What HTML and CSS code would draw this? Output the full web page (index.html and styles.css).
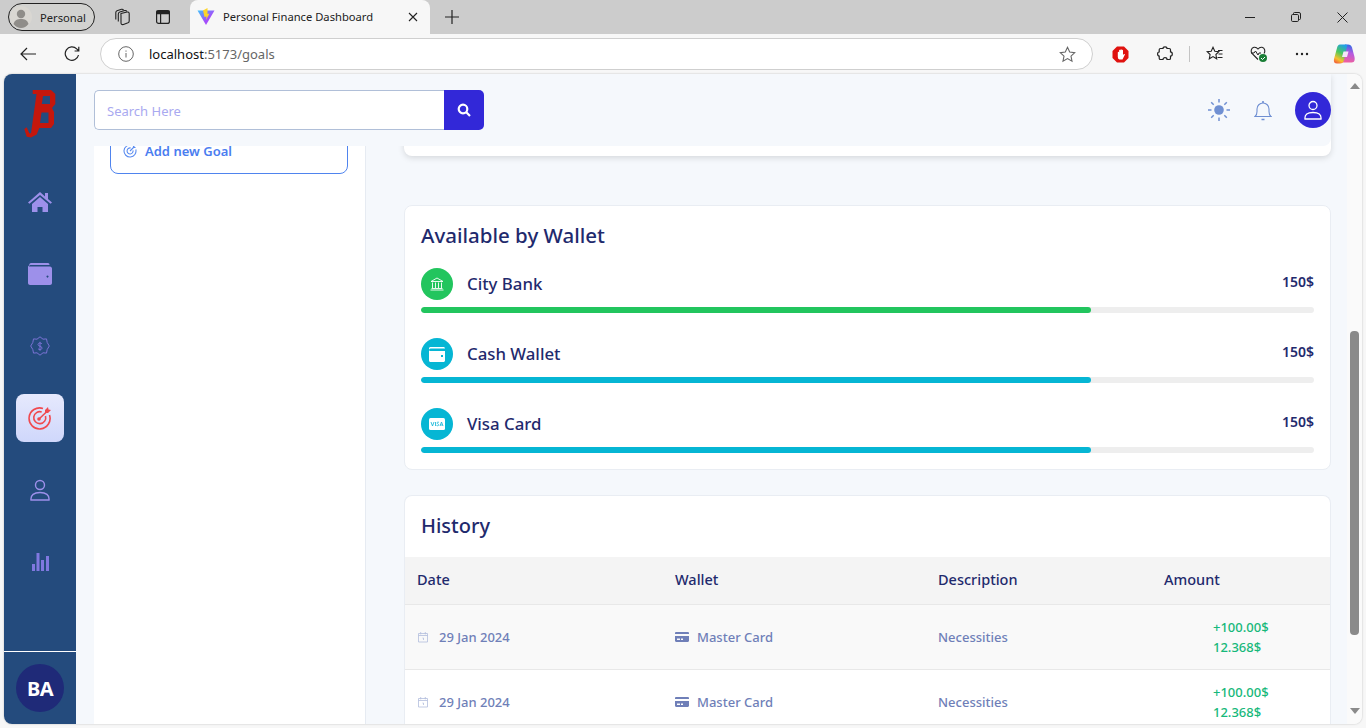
FILE: index.html
```html
<!DOCTYPE html>
<html lang="en">
<head>
<meta charset="utf-8">
<title>Personal Finance Dashboard</title>
<link rel="stylesheet" href="styles.css">
</head>
<body>
<svg class="defs" width="0" height="0" aria-hidden="true">
  <symbol id="cal" viewBox="0 0 12 12"><path d="M1.500 2.500h9v8.500h-9zM1.500 4.500h9M3.700 1v2.400M8.300 1v2.400M5.500 7h1v2" fill="none" stroke="currentColor" stroke-width=".8"/></symbol>
  <symbol id="card" viewBox="0 0 14 10"><path d="M1.200 0h11.600C13.500 0 14 .5 14 1.200V2H0v-.8C0 .5.5 0 1.200 0zM0 4h14v4.800c0 .7-.5 1.200-1.200 1.200H1.200C.5 10 0 9.500 0 8.800zm2 2.500V8h3V6.500zm4 0V8h2V6.500z" fill="currentColor" fill-rule="evenodd"/></symbol>
</svg>
<div class="browser">
  <div class="tabstrip">
    <div class="profile">
      <svg width="22" height="22" viewBox="0 0 22 22"><circle cx="11" cy="11" r="11" fill="#d9d7d2"/><circle cx="11" cy="8" r="4.200" fill="#8f8d89"/><path d="M3.500 18c1-4 4-5 7.500-5s6.500 1 7.500 5c-2 2.500-4.500 4-7.500 4s-5.500-1.500-7.500-4z" fill="#8f8d89"/></svg>
      <span>Personal</span>
    </div>
    <svg class="chrome-icon" width="18" height="18" viewBox="0 0 18 18" fill="none" stroke="#222" stroke-width="1.100"><path d="M8 5.500l6-1.500q2-.3 2.200 1.500v7.500q0 1.300-1.200 1.800l-4.500 1.700q-2.500.6-2.500-1.800V7.500Q7.800 6 8 5.500z"/><path d="M5.300 13.500V6q0-1.500 1.500-2l5-1.500q1.500-.3 2 1"/><path d="M2.800 11.500V4.500q0-1.300 1.200-1.800L8.500 1.300q1.500-.3 2 1"/></svg>
    <svg class="chrome-icon layout" width="16" height="16" viewBox="0 0 16 16" fill="none" stroke="#222" stroke-width="1.200"><rect x="1.600" y="1.600" width="12.800" height="12.800" rx="2"/><path d="M5.600 4.600v9.800"/><path d="M2 2h12v2.600H2z" fill="#222"/></svg>
    <div class="tab">
      <svg width="18" height="18" viewBox="0 0 18 18"><path d="M.5 2.500h17L9 17z" fill="url(#vg)"/><path d="M10.500 0 6 2.500 7.500 9l2-.5-.5 3.500 3.500-6.500-2 .5z" fill="#fdd52a"/><defs><linearGradient id="vg" x1="0" y1="0" x2="1" y2="1"><stop offset="0" stop-color="#41c4fb"/><stop offset=".6" stop-color="#a44dfb"/></linearGradient></defs></svg>
      <span class="tab-title">Personal Finance Dashboard</span>
      <svg class="tab-x" width="10" height="10" viewBox="0 0 10 10" stroke="#222" stroke-width="1.100"><path d="M1 1l8 8M9 1 1 9"/></svg>
    </div>
    <svg class="newtab" width="14" height="14" viewBox="0 0 14 14" stroke="#222" stroke-width="1.200"><path d="M7 0v14M0 7h14"/></svg>
    <div class="winctl">
      <svg width="10" height="10" viewBox="0 0 10 10" stroke="#222"><path d="M0 5.500h10"/></svg>
      <svg width="10" height="10" viewBox="0 0 10 10" fill="none" stroke="#222"><rect x=".5" y="2.500" width="7" height="7" rx="1.200"/><path d="M2.500 2.500V1.500q0-1 1-1h4.500q1.500 0 1.500 1.500v4.500q0 1-1 1h-1"/></svg>
      <svg width="11" height="11" viewBox="0 0 11 11" stroke="#222"><path d="M.5.5l10 10M10.500.5l-10 10"/></svg>
    </div>
  </div>
  <div class="toolbar">
    <svg class="back" width="16" height="14" viewBox="0 0 16 14" fill="none" stroke="#222" stroke-width="1.200"><path d="M16 7H1M7 1 1 7l6 6"/></svg>
    <svg class="reload" width="16" height="16" viewBox="0 0 16 16" fill="none" stroke="#222" stroke-width="1.200"><path d="M14.500 9a6.700 6.700 0 1 1-1.800-6.100L14.800 5M14.800 .8V5h-4.200"/></svg>
    <div class="omnibox">
      <svg width="16" height="16" viewBox="0 0 16 16" fill="none" stroke="#666" stroke-width="1"><circle cx="8" cy="8" r="7.300"/><path d="M8 7v4.500M8 4.500v1.200"/></svg>
      <span class="url"><b>localhost</b>:5173/goals</span>
      <svg class="star" width="17" height="17" viewBox="0 0 17 17" fill="none" stroke="#666" stroke-width="1.100"><path d="M8.500 1.300l2.200 4.700 5 .6-3.700 3.500 1 5.100-4.500-2.600-4.500 2.600 1-5.100L1.300 6.600l5-.6z"/></svg>
    </div>
    <div class="ext">
      <svg width="17" height="17" viewBox="0 0 17 17"><path d="M5 .5h7L16.500 5v7L12 16.500H5L.5 12V5z" fill="#e0120f"/><path d="M5.800 11V6.500q0-.8.600-.8t.7.8V4.500q0-.8.600-.8t.7.8V4q0-.8.700-.8t.7.8v.5q0-.7.600-.7t.6.700V9l.7-.8q.6-.5 1-.1t0 1L10.500 13.500H7.500q-1.700-.5-1.700-2.500z" fill="#fff"/></svg>
      <svg width="16" height="16" viewBox="0 0 16 16" fill="none" stroke="#222" stroke-width="1.200"><path d="M6 2.500C6 1.200 7 .8 8 .8s2 .6 2 1.700h2.200c.7 0 1.300.6 1.300 1.300v2c1.200 0 1.800 1 1.800 2.100s-.6 2.100-1.800 2.100v2.200c0 .8-.6 1.300-1.300 1.300H10c0-1.200-.9-1.800-2-1.800s-2 .6-2 1.800H3.500c-.8 0-1.300-.6-1.300-1.300v-2.200C1 10 .6 9 .6 8S1 6 2.200 6V3.800c0-.7.600-1.300 1.300-1.300z"/></svg>
      <i class="sep"></i>
      <svg width="17" height="16" viewBox="0 0 17 16" fill="none" stroke="#222" stroke-width="1.100"><path d="M7 1.300 8.800 5.300l4 .4-2.900 2.800.8 4.300L7 10.600l-3.700 2.200.8-4.300L1.200 5.700l4-.4zM12 4.500h4.500M12.500 8h4M11.500 11.500h5"/></svg>
      <svg class="health" width="18" height="18" viewBox="0 0 18 18"><path d="M8 14.500 2 8.500C.5 6.500 1 3 4 2.300c2-.4 3.200.7 4 1.700.8-1 2-2.100 4-1.700 3 .7 3.500 4.200 2 6.200" fill="none" stroke="#222" stroke-width="1.100"/><path d="M1 8h3l1.500-2L8 10l1-2h2" fill="none" stroke="#222"/><circle cx="13" cy="13" r="4" fill="#1a7f37"/><path d="M11 13l1.500 1.500L15 12" fill="none" stroke="#fff"/></svg>
      <svg class="dots" width="14" height="4" viewBox="0 0 14 4" fill="#222"><circle cx="2" cy="2" r="1.200"/><circle cx="7" cy="2" r="1.200"/><circle cx="12" cy="2" r="1.200"/></svg>
      <svg class="copilot" width="22" height="20" viewBox="0 0 22 20"><defs><linearGradient id="cp1" x1=".7" y1="0" x2=".3" y2="1"><stop offset="0" stop-color="#1f9fe8"/><stop offset=".45" stop-color="#4cc85c"/><stop offset=".8" stop-color="#f6c12f"/><stop offset="1" stop-color="#f26a3a"/></linearGradient><linearGradient id="cp2" x1=".6" y1="0" x2=".4" y2="1"><stop offset="0" stop-color="#2f6be6"/><stop offset=".45" stop-color="#b65ae0"/><stop offset="1" stop-color="#f2609a"/></linearGradient></defs><path d="M12 .5h3q3 0 4 3l2.500 9.500q1 5.500-3 5.500H8z" fill="url(#cp2)"/><path d="M7 .5h6q1.500 0 1 2L11 16q-.8 3.500-4 3.500H4Q.2 19.500 1 15L4 4q.7-3.500 3-3.500z" fill="url(#cp1)"/><path d="M10.500 7.500h5l-1.500 5.500h-5z" fill="#f4e6f8"/></svg>
    </div>
  </div>
  <div class="viewport">
    <nav class="rail">
      <div class="logo">
        <svg width="32" height="48" viewBox="0 0 32 48"><path d="M8.700 0H27l4.300 4v10L28 18l2 4v12l-3 4H15.300l-2.600 6.500L7 47.500l-4.300-.8L.3 39l2.400-1.700 2.600 6H7L12.500 4H8.700zM19 6l-1.200 8H26V6zM17.500 22.500 16 33h8.500V22.500z" fill="#c4170c" fill-rule="evenodd"/></svg>
      </div>
      <ul class="rail-items">
        <li class="rail-item"><svg width="24" height="20" viewBox="0 0 24 20" fill="#9d90ea"><path d="M12 0 0 10.500l1.400 1.300L12 3l10.600 8.800L24 10.500l-4-3.500V1h-3v3.500z"/><path d="M4 12 12 5l8 7v8h-5.500v-5h-5v5H4z"/></svg></li>
        <li class="rail-item"><svg width="24" height="22" viewBox="0 0 24 22" fill="#9d90ea"><path d="M3 0h17c1 0 1.500.8 1.500 2H3C2 2 1.500 2.500 1 3 1 1 2 0 3 0z"/><path d="M2 3.500h20c1 0 2 1 2 2V20c0 1-1 2-2 2H2c-1 0-2-1-2-2V2c0 1 1 1.500 2 1.500zm17.500 9a1 1 0 1 0 .01 0z" fill-rule="evenodd"/></svg></li>
        <li class="rail-item"><svg width="20" height="21" viewBox="0 0 20 21" fill="none" stroke="#7a72d4" stroke-width="1"><path d="M10 .8l3 2.400 3.500-.3.700 3.600L19.300 10l-2.100 3.500-.7 3.600-3.500-.3-3 2.400-3-2.400-3.500.3-.7-3.600L.7 10l2.100-3.500.7-3.600 3.500.3z"/><path d="M12 8c-.4-.8-1.200-1-2-1-1.200 0-2 .6-2 1.500 0 2.200 4 1.200 4 3.500 0 1-.8 1.600-2 1.600-.8 0-1.600-.3-2-1M10 5.800v9"/></svg></li>
        <li class="rail-item active"><svg width="24" height="24" viewBox="0 0 24 24" fill="none" stroke="#f0494f" stroke-width="1.600"><path d="M21.500 9a10.500 10.500 0 1 1-6.500-6.500"/><path d="M17.500 10a6 6 0 1 1-3.800-4"/><circle cx="11" cy="13" r="1.800" fill="#f0494f" stroke="none"/><path d="M11 13 20 4.500"/><path d="M17 4l3-3 .5 2.500L23 4l-3 3h-3z" fill="#f0494f" stroke="none"/></svg></li>
        <li class="rail-item"><svg width="20" height="22" viewBox="0 0 20 22" fill="none" stroke="#9d90ea" stroke-width="1.400"><circle cx="10" cy="6" r="4.500"/><path d="M1 21c-.5-5 3-7.500 9-7.500s9.500 2.500 9 7.500z"/></svg></li>
        <li class="rail-item"><svg width="17" height="18" viewBox="0 0 17 18" fill="#8078e0"><rect y="11" width="3" height="7"/><rect x="4.500" width="3" height="18"/><rect x="9" y="7" width="3" height="11"/><rect x="14" y="3" width="3" height="15"/></svg></li>
      </ul>
      <div class="rail-foot"><div class="initials">BA</div></div>
    </nav>
    <div class="page">
      <header class="topbar">
        <div class="search">
          <input class="search-input" type="text" placeholder="Search Here">
          <button class="search-btn" aria-label="Search"><svg width="14" height="14" viewBox="0 0 14 14" fill="none" stroke="#fff" stroke-width="2.200"><circle cx="6" cy="6" r="4.300"/><path d="M9.300 9.300 13 13"/></svg></button>
        </div>
        <div class="top-actions">
          <svg width="22" height="22" viewBox="0 0 22 22" fill="#6f8fd2"><circle cx="11" cy="11" r="4.800"/><g stroke="#6f8fd2" stroke-width="1.500"><path d="M11 0v3.500M11 18.500V22M0 11h3.500M18.500 11H22M3.200 3.200l2.500 2.500M16.300 16.300l2.500 2.500M3.200 18.800l2.500-2.500M16.300 5.700l2.500-2.500"/></g></svg>
          <svg width="18" height="21" viewBox="0 0 18 21" fill="none" stroke="#6f8fd2" stroke-width="1.100"><path d="M1 16.500h16c-1.500-1-2-2.500-2-5V9c0-3.300-2.700-6-6-6S3 5.700 3 9v2.500c0 2.500-.5 4-2 5z"/><path d="M7.500 19.500h3M9 1v2" stroke-width="1.600"/></svg>
          <div class="user-avatar"><svg width="18" height="20" viewBox="0 0 18 20" fill="none" stroke="#fff" stroke-width="1.300"><circle cx="9" cy="5.500" r="4"/><path d="M1 19c-.5-4.500 2.500-6.500 8-6.500s8.500 2 8 6.500z"/></svg></div>
        </div>
      </header>
      <aside class="goals-panel">
        <button class="add-goal"><svg width="14" height="14" viewBox="0 0 14 14" fill="none" stroke="#5a8cf0" stroke-width="1.100"><path d="M12.800 5.500A6 6 0 1 1 8.500 1.200"/><path d="M10 6.300A3 3 0 1 1 7.700 4"/><path d="M7 7l4.500-4.500M10.500 1.500V3.500h2"/></svg><span>Add new Goal</span></button>
      </aside>
      <main class="content">
        <section class="card stub"></section>
        <section class="card wallets">
          <h2 class="card-title">Available by Wallet</h2>
          <div class="wallet">
            <div class="wallet-head">
              <span class="wallet-icon green"><svg width="14" height="14" viewBox="0 0 14 14" fill="none" stroke="#fff" stroke-width=".9"><path d="M1 4.500 7 1l6 3.500zM2.500 5.500v5.500M5.500 5.500v5.500M8.500 5.500v5.500M11.500 5.500v5.500M1.500 11.500h11M.5 13h13"/></svg></span>
              <span class="wallet-name">City Bank</span>
              <span class="wallet-amount">150$</span>
            </div>
            <div class="track"><div class="fill green" style="width:75%"></div></div>
          </div>
          <div class="wallet">
            <div class="wallet-head">
              <span class="wallet-icon blue"><svg width="16" height="15" viewBox="0 0 16 15" fill="#fff"><path d="M1.500 0h13c.8 0 1.500.7 1.500 1.500H1.500A1.500 1.500 0 0 0 0 3 2 2 0 0 1 1.500 0z"/><path d="M0 3c0 .5.7 1 1.500 1H16v9.500c0 .8-.7 1.500-1.500 1.500h-13C.7 15 0 14.300 0 13.500zm12 5v2h2V8z" fill-rule="evenodd"/></svg></span>
              <span class="wallet-name">Cash Wallet</span>
              <span class="wallet-amount">150$</span>
            </div>
            <div class="track"><div class="fill blue" style="width:75%"></div></div>
          </div>
          <div class="wallet">
            <div class="wallet-head">
              <span class="wallet-icon blue"><svg width="16" height="12" viewBox="0 0 16 12"><rect width="16" height="12" rx="1.500" fill="#fff"/><path d="M2 4l1.500 4L5 4M6.500 4v4M10 4.500c-1-.8-2.300-.2-1.800.8s1.800.8 1.500 1.800c-.3.800-1.500.8-2.200.3M11 8l1.500-4L14 8M11.500 7h2" fill="none" stroke="#06b2d6" stroke-width=".8"/></svg></span>
              <span class="wallet-name">Visa Card</span>
              <span class="wallet-amount">150$</span>
            </div>
            <div class="track"><div class="fill blue" style="width:75%"></div></div>
          </div>
        </section>
        <section class="card history">
          <h2 class="card-title">History</h2>
          <div class="row head">
            <div>Date</div><div>Wallet</div><div>Description</div><div>Amount</div>
          </div>
          <div class="row odd">
            <div class="cell"><svg class="cal" width="12" height="12"><use href="#cal"/></svg>29 Jan 2024</div>
            <div class="cell"><svg class="mc" width="14" height="10"><use href="#card"/></svg>Master Card</div>
            <div class="cell">Necessities</div>
            <div class="amount">+100.00$<br>12.368$</div>
          </div>
          <div class="row">
            <div class="cell"><svg class="cal" width="12" height="12"><use href="#cal"/></svg>29 Jan 2024</div>
            <div class="cell"><svg class="mc" width="14" height="10"><use href="#card"/></svg>Master Card</div>
            <div class="cell">Necessities</div>
            <div class="amount">+100.00$<br>12.368$</div>
          </div>
        </section>
      </main>
    </div>
    <div class="scrollbar">
      <svg width="10" height="6" viewBox="0 0 10 6" fill="#8a8a8a"><path d="M5 0l5 6H0z"/></svg>
      <div class="scroll-track"><div class="scroll-thumb"></div></div>
      <svg width="10" height="6" viewBox="0 0 10 6" fill="#8a8a8a"><path d="M5 6 0 0h10z"/></svg>
    </div>
  </div>
</div>
</body>
</html>
```
FILE: styles.css
```css
* { box-sizing: border-box; }
html, body { margin: 0; height: 100%; overflow: hidden; }
body { font-family: "Noto Sans", "Open Sans", sans-serif; color: #1f2a6d; }
.defs { position: absolute; }
svg { display: block; flex: none; }
.browser { width: 1366px; height: 728px; display: flex; flex-direction: column; background: #f7f7f7; }

.tabstrip { height: 34px; background: #cccccc; display: flex; align-items: center; padding-left: 8px; flex: none; }
.profile { width: 87px; height: 28px; border: 1px solid #222; border-radius: 14px; display: flex; align-items: center; gap: 8px; padding-left: 1px; font-size: 11.2px; color: #222; background: #d2d2d0; }
.chrome-icon { margin-left: 18px; }
.chrome-icon.layout { margin-left: 24px; }
.tab { width: 240px; height: 34px; margin-left: 19px; background: #f7f7f7; border-radius: 8px 8px 0 0; display: flex; align-items: center; padding-left: 7px; font-size: 11.2px; color: #222; }
.tab-title { margin-left: 8px; flex: 1; padding-bottom: 1px; }
.tab-x { margin-right: 12px; }
.newtab { margin-left: 15px; }
.winctl { margin-left: auto; display: flex; align-items: center; gap: 36px; padding-right: 18px; }

.toolbar { height: 40px; flex: none; display: flex; align-items: center; padding-left: 20px; }
.reload { margin-left: 28px; }
.omnibox { margin-left: 20px; width: 993px; height: 32px; background: #fff; border: 1px solid #cfcfcf; border-radius: 16px; display: flex; align-items: center; padding: 0 16px 0 17px; font-size: 13px; color: #666; }
.url { margin-left: 15px; flex: 1; }
.url b { font-weight: 400; color: #111; }
.ext { display: flex; align-items: center; margin-left: 19px; }
.ext > svg:nth-child(2) { margin-left: 28px; }
.sep { width: 1px; height: 16px; background: #c4c4c4; margin: 0 16px; }
.health { margin-left: 27px; }
.dots { margin-left: 27px; }
.copilot { margin-left: 24px; }

.viewport { flex: 1; min-height: 0; margin: 0 4px 4px; display: flex; border-radius: 8px; overflow: hidden; box-shadow: 0 0 2px rgba(0,0,0,.25); }
.rail { width: 72px; flex: none; background: #244b7d; display: flex; flex-direction: column; align-items: center; }
.logo { height: 104px; padding-top: 16px; }
.rail-items { list-style: none; margin: 0; padding: 0; display: flex; flex-direction: column; gap: 24px; flex: 1; }
.rail-item { width: 48px; height: 48px; display: flex; align-items: center; justify-content: center; border-radius: 8px; }
.rail-item.active { background: linear-gradient(180deg, #e6e9fd, #cfd7fb); }
.rail-foot { width: 100%; height: 73px; border-top: 1px solid #fff; padding: 12px 12px 0; }
.initials { width: 48px; height: 48px; border-radius: 50%; background: #1f2a78; color: #fff; font-size: 20px; font-weight: 700; display: flex; align-items: center; justify-content: center; letter-spacing: -.5px; }

.page { flex: 1; min-width: 0; position: relative; background: #f5f8fc; display: flex; overflow: hidden; padding-left: 18px; }
.topbar { position: absolute; left: 18px; top: 0; width: 1237px; height: 72px; background: #f5f8fc; display: flex; align-items: center; justify-content: space-between; border-radius: 0 0 8px 0; z-index: 2; }
.search { display: flex; }
.search-input { width: 350px; height: 40px; border: 1px solid #b0bfd8; border-right: 0; border-radius: 5px 0 0 5px; padding: 1px 12px 0; font: 13px "Noto Sans", sans-serif; background: #fff; outline: 0; }
.search-input::placeholder { color: #a9a9f0; opacity: 1; }
.search-btn { width: 40px; height: 40px; border: 0; background: #3228d8; border-radius: 0 5px 5px 0; display: flex; align-items: center; justify-content: center; padding: 0; }
.top-actions { display: flex; align-items: center; }
.top-actions svg:nth-child(2) { margin-left: 24px; }
.user-avatar { width: 36px; height: 36px; margin-left: 23px; border-radius: 50%; background: #3228d8; display: flex; align-items: center; justify-content: center; }

.goals-panel { width: 272px; flex: none; background: #fff; border-right: 1px solid #e6ebf2; padding: 56px 17px 0 16px; }
.add-goal { width: 238px; height: 44px; border: 1px solid #4f84ee; border-radius: 8px; background: #fff; color: #4a7df0; font: 600 13px "Noto Sans", sans-serif; display: flex; align-items: center; gap: 8px; padding: 0 12px 2px; }

.content { width: 927px; margin-left: 38px; flex: none; display: flex; flex-direction: column; }
.card { background: #fff; border: 1px solid #e9edf3; border-radius: 8px; flex: none; }
.stub { height: 82px; border: 0; border-radius: 0 0 8px 8px; box-shadow: 0 2px 6px rgba(0,0,0,.13); margin-bottom: 49px; }
.wallets { height: 265px; padding: 11px 16px 0; margin-bottom: 25px; }
.card-title { margin: 0 0 13px; font-size: 20.500px; font-weight: 500; line-height: 36px; color: #1f2a6d; }
.wallet { height: 70px; padding-top: 2px; }
.wallet-head { display: flex; align-items: center; height: 32px; }
.wallet-icon { width: 32px; height: 32px; border-radius: 50%; display: flex; align-items: center; justify-content: center; }
.wallet-name { margin-left: 14px; font-size: 16.800px; font-weight: 500; flex: 1; line-height: 32px; }
.wallet-amount { font-size: 14px; font-weight: 600; align-self: flex-start; line-height: 28px; }
.green { background: #22c55e; }
.blue { background: #06b6d4; }
.track { height: 6px; margin-top: 7px; background: #eeeeee; border-radius: 3px; overflow: hidden; }
.fill { height: 100%; border-radius: 3px; }
.history { height: 300px; border-bottom: 0; border-radius: 8px 8px 0 0; padding-top: 12px; }
.history .card-title { padding-left: 16px; margin: 0; height: 49px; font-size: 20px; }
.row { display: grid; grid-template-columns: 258px 263px 226px 1fr; padding-left: 12px; align-items: center; height: 65px; border-bottom: 1px solid #e8e8e8; font-size: 13px; font-weight: 500; color: #6f7fb8; }
.row.head { height: 48px; padding-bottom: 4px; background: #f4f4f4; font-size: 14.500px; font-weight: 500; color: #1f2a6d; }
.row.odd { background: #f9f9f9; }
.cell { display: flex; align-items: center; }
.cal { color: #b3bedd; margin-right: 10px; }
.mc { color: #6f7fb8; margin-right: 8px; }
.amount { padding-left: 49px; line-height: 20px; color: #16b87a; }

.scrollbar { width: 15px; flex: none; background: #fafafa; display: flex; flex-direction: column; align-items: center; padding: 9px 0 10px; }
.scroll-track { flex: 1; width: 100%; padding: 0 3px; margin-top: 242px; margin-bottom: 73px; }
.scroll-thumb { height: 100%; width: 9px; background: #8a8a8a; border-radius: 4px; }
```
